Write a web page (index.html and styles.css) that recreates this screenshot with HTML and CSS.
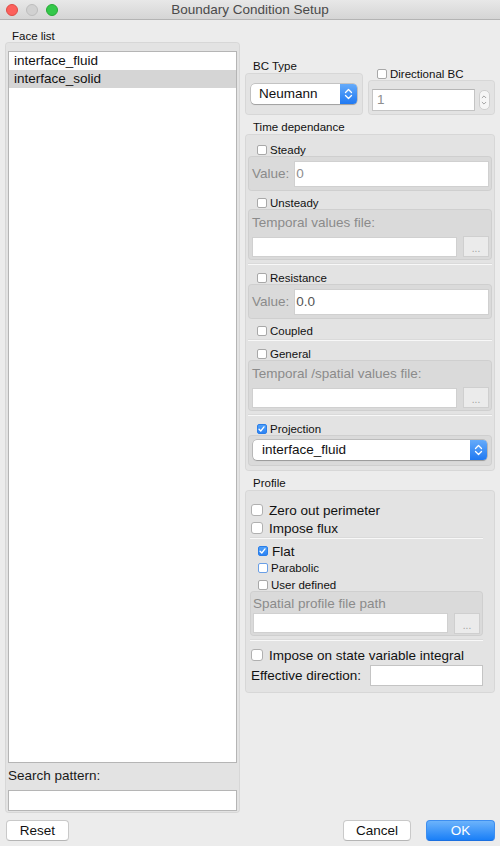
FILE: index.html
```html
<!DOCTYPE html>
<html>
<head>
<meta charset="utf-8">
<title>Boundary Condition Setup</title>
<link rel="stylesheet" href="styles.css">
</head>
<body>
<div class="window">
  <div class="titlebar">
    <div class="lights">
      <span class="light red"></span>
      <span class="light grey"></span>
      <span class="light green"></span>
    </div>
    <div class="title">Boundary Condition Setup</div>
    <div></div>
  </div>

  <div class="main">
    <div class="left">
      <div class="glabel face-label">Face list</div>
      <div class="group leftbox">
        <div class="list">
          <div class="row">interface_fluid</div>
          <div class="row selected">interface_solid</div>
        </div>
        <div class="search-label">Search pattern:</div>
        <div class="field search"></div>
      </div>
    </div>

    <div class="right">
      <div class="toprow">
        <div class="bccol">
          <div class="glabel bc-label">BC Type</div>
          <div class="group bcbox">
            <div class="select bcselect">
              <span class="select-text">Neumann</span>
              <span class="stepper">
                <svg width="17" height="20" viewBox="0 0 17 20"><path d="M5.5 8.5 L8.5 5.5 L11.5 8.5 M5.5 11.5 L8.5 14.5 L11.5 11.5" fill="none" stroke="#fff" stroke-width="1.3" stroke-linecap="round" stroke-linejoin="round"/></svg>
              </span>
            </div>
          </div>
        </div>
        <div class="dircol">
          <div class="chk small dir-row"><span class="cb"></span><span>Directional BC</span></div>
          <div class="group dirbox">
            <div class="field dirfield">1</div>
            <div class="spin">
              <svg width="11" height="20" viewBox="0 0 11 20"><path d="M3.5 7.5 L5.5 5.5 L7.5 7.5 M3.5 12.5 L5.5 14.5 L7.5 12.5" fill="none" stroke="#9a9a9a" stroke-width="1" stroke-linecap="round" stroke-linejoin="round"/></svg>
            </div>
          </div>
        </div>
      </div>

      <div class="glabel sec-label">Time dependance</div>
      <div class="group timebox">
        <div class="chk small steady-row"><span class="cb"></span><span>Steady</span></div>
        <div class="sub valbox">
          <span class="dis-label">Value:</span>
          <div class="field valfield dim">0</div>
        </div>
        <div class="chk small gap5"><span class="cb"></span><span>Unsteady</span></div>
        <div class="sub filebox">
          <div class="dis-label">Temporal values file:</div>
          <div class="filerow">
            <div class="field filefield"></div>
            <div class="dots">...</div>
          </div>
        </div>
        <div class="sep sep-a"></div>
        <div class="chk small gap6"><span class="cb"></span><span>Resistance</span></div>
        <div class="sub valbox">
          <span class="dis-label">Value:</span>
          <div class="field valfield mid">0.0</div>
        </div>
        <div class="chk small gap5"><span class="cb"></span><span>Coupled</span></div>
        <div class="sep sep-b"></div>
        <div class="chk small gap6"><span class="cb"></span><span>General</span></div>
        <div class="sub filebox">
          <div class="dis-label">Temporal /spatial values file:</div>
          <div class="filerow">
            <div class="field filefield"></div>
            <div class="dots">...</div>
          </div>
        </div>
        <div class="sep sep-a"></div>
        <div class="chk small gap6">
          <span class="cb on"><svg width="10" height="10" viewBox="0 0 10 10"><path d="M2.3 5.2 L4.2 7.2 L7.8 2.6" fill="none" stroke="#fff" stroke-width="1.5" stroke-linecap="round" stroke-linejoin="round"/></svg></span>
          <span>Projection</span>
        </div>
        <div class="sub projbox">
          <div class="select projselect">
            <span class="select-text">interface_fluid</span>
            <span class="stepper">
              <svg width="17" height="20" viewBox="0 0 17 20"><path d="M5.5 8.5 L8.5 5.5 L11.5 8.5 M5.5 11.5 L8.5 14.5 L11.5 11.5" fill="none" stroke="#fff" stroke-width="1.3" stroke-linecap="round" stroke-linejoin="round"/></svg>
            </span>
          </div>
        </div>
      </div>

      <div class="glabel sec-label">Profile</div>
      <div class="group profbox">
        <div class="chk big zero-row"><span class="cb lg"></span><span>Zero out perimeter</span></div>
        <div class="chk big gap2"><span class="cb lg"></span><span>Impose flux</span></div>
        <div class="sep sep-c"></div>
        <div class="chk mid-row flat-row">
          <span class="cb on"><svg width="10" height="10" viewBox="0 0 10 10"><path d="M2.3 5.2 L4.2 7.2 L7.8 2.6" fill="none" stroke="#fff" stroke-width="1.5" stroke-linecap="round" stroke-linejoin="round"/></svg></span>
          <span>Flat</span>
        </div>
        <div class="chk small indent gap3"><span class="cb focus"></span><span>Parabolic</span></div>
        <div class="chk small indent gap4"><span class="cb"></span><span>User defined</span></div>
        <div class="sub spatbox">
          <div class="dis-label">Spatial profile file path</div>
          <div class="filerow spatrow">
            <div class="field filefield"></div>
            <div class="dots">...</div>
          </div>
        </div>
        <div class="sep sep-d"></div>
        <div class="chk big gap6"><span class="cb lg"></span><span>Impose on state variable integral</span></div>
        <div class="effrow">
          <span>Effective direction:</span>
          <div class="field efffield"></div>
        </div>
      </div>
    </div>
  </div>

  <div class="footer">
    <div class="btn reset">Reset</div>
    <div class="spacer"></div>
    <div class="btn cancel">Cancel</div>
    <div class="btn ok">OK</div>
  </div>
</div>
</body>
</html>
```

FILE: styles.css
```css
* { box-sizing: border-box; }

html, body {
  margin: 0;
  padding: 0;
}

body {
  background: #ececec;
  font-family: "Liberation Sans", Arial, sans-serif;
  color: #1a1a1a;
  width: 500px;
  height: 846px;
  overflow: hidden;
}

.window {
  width: 500px;
  height: 846px;
  display: flex;
  flex-direction: column;
}

/* Title bar */
.titlebar {
  height: 20px;
  flex: none;
  display: grid;
  grid-template-columns: 1fr auto 1fr;
  align-items: center;
  background: linear-gradient(#e8e8e8, #d5d5d5);
  border-bottom: 1px solid #b4b4b4;
}

.lights {
  display: flex;
  gap: 8px;
  padding-left: 6px;
  align-items: center;
}

.light {
  width: 12px;
  height: 12px;
  border-radius: 50%;
  display: block;
}

.light.red { background: #fc605c; border: 0.5px solid #de4c45; }
.light.grey { background: #d1d1d1; border: 0.5px solid #bdbdbd; }
.light.green { background: #34c84a; border: 0.5px solid #27aa35; }

.title {
  font-size: 13.5px;
  color: #4a4a4a;
  line-height: 19px;
}

/* Main area */
.main {
  height: 795px;
  flex: none;
  display: flex;
  gap: 5px;
  padding: 10px 5px 0 5px;
}

.glabel {
  font-size: 11.5px;
  line-height: 12px;
  color: #111;
}

.group {
  background: rgba(0, 0, 0, 0.035);
  border: 1px solid rgba(0, 0, 0, 0.055);
  border-radius: 4px;
}

.sub {
  background: rgba(0, 0, 0, 0.04);
  border: 1px solid rgba(0, 0, 0, 0.05);
  border-radius: 4px;
}

.field {
  background: #fff;
  border: 1px solid #c4c4c4;
  border-top-color: #b6b6b6;
}

/* Left column */
.left {
  width: 235px;
  display: flex;
  flex-direction: column;
}

.face-label { padding-left: 7px; }

.leftbox {
  flex: 1;
  display: flex;
  flex-direction: column;
  padding: 8px 2px 1px 2px;
  margin-bottom: 2px;
}

.list {
  flex: 1;
  background: #fff;
  border: 1px solid #b5b5b5;
}

.row {
  height: 18px;
  line-height: 18px;
  font-size: 13.5px;
  padding-left: 5px;
  color: #111;
}

.row.selected { background: #d5d5d5; }

.search-label {
  font-size: 13.5px;
  line-height: 16px;
  margin: 5px 0 6px 0;
}

.search {
  height: 21px;
  border-color: #b5b5b5;
}

/* Right column */
.right {
  width: 250px;
  display: flex;
  flex-direction: column;
  padding-top: 30px;
}

.toprow {
  display: flex;
  gap: 5px;
  align-items: flex-end;
}

.bccol { width: 118px; }
.bc-label { padding-left: 8px; }

.bcbox {
  margin-top: 1px;
  height: 42px;
  padding: 10px 5px 0 5px;
}

.select {
  display: flex;
  height: 20px;
  border-radius: 4px;
  background: #fff;
  box-shadow: 0 0 0 0.5px rgba(0, 0, 0, 0.28), 0 1px 1px rgba(0, 0, 0, 0.18);
  font-size: 13.5px;
  line-height: 20px;
  color: #111;
}

.select-text {
  flex: 1;
  padding-left: 8px;
}

.stepper {
  width: 17px;
  height: 20px;
  border-radius: 0 4px 4px 0;
  background: linear-gradient(#65abfa, #1f79f2);
  display: flex;
}

.dircol { width: 127px; }

.dir-row { padding-left: 9px; }

.dirbox {
  height: 35px;
  padding: 8px 0 0 3px;
  display: flex;
  align-items: flex-start;
  gap: 4px;
}

.dirfield {
  width: 103px;
  height: 22px;
  font-size: 13.5px;
  line-height: 20px;
  padding-left: 4px;
  color: #8e8e8e;
}

.spin {
  width: 11px;
  height: 20px;
  margin-top: 1px;
  border: 1px solid #cfcfcf;
  border-radius: 5px;
  background: #f6f6f6;
  display: flex;
  overflow: hidden;
}

.spin svg { margin-left: -1px; margin-top: -1px; }

.sec-label {
  margin-top: 6px;
  padding-left: 8px;
  margin-bottom: 1px;
}

/* Checkbox rows */
.chk {
  display: flex;
  align-items: center;
}

.chk.small {
  height: 13px;
  font-size: 11.5px;
  color: #111;
  gap: 3px;
}

.chk.big {
  height: 16px;
  font-size: 13.5px;
  color: #111;
  gap: 6px;
  padding-left: 1px;
}

.chk.mid-row {
  height: 14px;
  font-size: 13.5px;
  color: #111;
  gap: 4px;
  padding-left: 8px;
}

.cb {
  width: 10px;
  height: 10px;
  flex: none;
  background: #fff;
  border: 1px solid #a8a8a8;
  border-radius: 2px;
  display: flex;
}

.cb.lg {
  width: 12px;
  height: 12px;
  border-radius: 3px;
  border-color: #b0b0b0;
}

.cb.on {
  background: linear-gradient(#4fa0f8, #2c83f4);
  border-color: #2a7ee8;
}

.cb.on svg { margin: -1px 0 0 -1px; }

.cb.focus { border-color: #6a9fe6; }

.timebox {
  padding: 0 2px 4px 2px;
}

.timebox .chk.small { padding-left: 9px; }

.steady-row { margin-top: 8px; }
.gap2 { margin-top: 2px; }
.gap3 { margin-top: 3px; }
.gap4 { margin-top: 4px; }
.gap5 { margin-top: 5px; }
.gap6 { margin-top: 6px; }

.dis-label {
  font-size: 13.5px;
  line-height: 16px;
  color: #8b8b8b;
}

.valbox {
  height: 35px;
  display: flex;
  align-items: center;
  gap: 5px;
  padding: 3px 2px 2px 3px;
}

.valfield {
  flex: 1;
  height: 26px;
  font-size: 13.5px;
  line-height: 24px;
  padding-left: 1px;
  border-color: #d0d0d0;
}

.valfield.dim { color: #8e8e8e; }
.valfield.mid { color: #555; }

.filebox {
  padding: 5px 2px 2px 3px;
}

.filerow {
  display: flex;
  align-items: flex-end;
  gap: 6px;
  margin-top: 5px;
}

.filefield {
  flex: 1;
  height: 20px;
  border-color: #d0d0d0;
}

.dots {
  width: 26px;
  height: 21px;
  border: 1px solid #cfcfcf;
  background: #ebebeb;
  color: #a0a0a0;
  font-size: 10px;
  line-height: 23px;
  text-align: center;
}

.sep {
  height: 1px;
  background: #f8f8f8;
  box-shadow: 0 -1px 0 rgba(0, 0, 0, 0.04);
}

.sep-a { margin-top: 4px; }
.sep-b { margin-top: 3px; }

.projbox {
  height: 31px;
  padding: 4px;
}

.projselect .select-text { padding-left: 9px; }

/* Profile */
.profbox {
  padding: 0 11px 0 4px;
  height: 203px;
}

.zero-row { margin-top: 11px; }

.sep-c { margin-top: 2px; }
.flat-row { margin-top: 5px; }

.chk.indent { padding-left: 8px; }

.spatbox {
  padding: 4px 2px 1px 2px;
}

.spatrow {
  margin-top: 0;
  align-items: center;
  height: 22px;
}

.sep-d { margin-top: 4px; }

.effrow {
  display: flex;
  align-items: center;
  margin-top: 2px;
  font-size: 13.5px;
  color: #111;
  padding-left: 1px;
}

.efffield {
  margin-left: auto;
  width: 113px;
  height: 21px;
  border-color: #c4c4c4;
}

/* Footer */
.footer {
  flex: 1;
  display: flex;
  align-items: flex-start;
  padding: 5px 5px 0 6px;
}

.spacer { flex: 1; }

.btn {
  height: 21px;
  border-radius: 4px;
  background: #fff;
  border: 1px solid #c9c9c9;
  border-bottom-color: #b5b5b5;
  font-size: 13.5px;
  line-height: 19px;
  text-align: center;
  color: #111;
}

.reset { width: 63px; }
.cancel { width: 68px; }

.ok {
  width: 69px;
  margin-left: 15px;
  background: linear-gradient(#6cb3fb, #1a7ff7);
  border-color: #3d8ef0;
  border-bottom-color: #1a6fe0;
  color: #fff;
}
```
